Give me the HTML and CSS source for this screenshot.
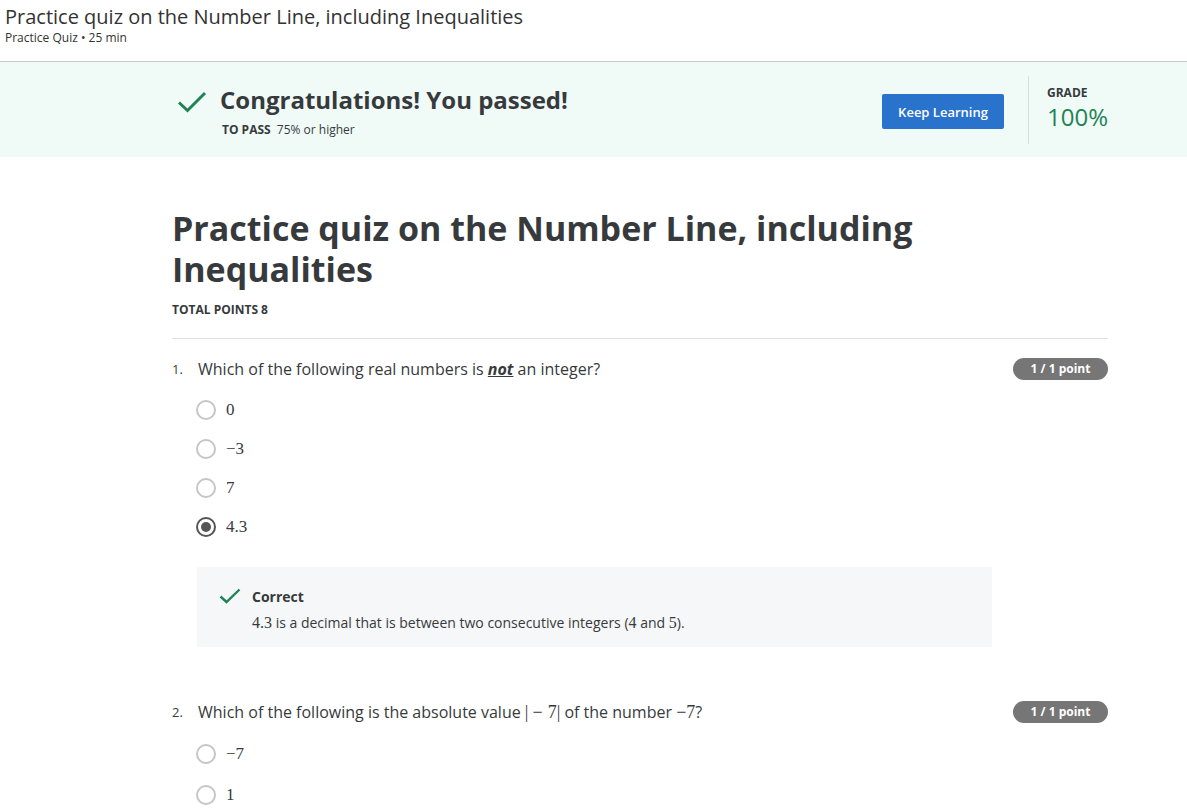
FILE: index.html
```html
<!DOCTYPE html>
<html>
<head>
<meta charset="utf-8">
<link rel="stylesheet" href="styles.css">
</head>
<body>
<header class="top">
  <div class="top-title">Practice quiz on the Number Line, including Inequalities</div>
  <div class="top-sub">Practice Quiz • 25 min</div>
</header>
<section class="banner">
  <div class="banner-inner">
    <svg class="banner-check" width="30" height="22" viewBox="0 0 30 22"><path d="M2 11.5 L10.5 19.5 L28 2" fill="none" stroke="#1f8354" stroke-width="3"/></svg>
    <div class="banner-text">
      <div class="banner-title">Congratulations! You passed!</div>
      <div class="banner-pass"><b>TO PASS</b> 75% or higher</div>
    </div>
    <button class="btn">Keep Learning</button>
    <div class="divider"></div>
    <div class="grade">
      <div class="grade-label">GRADE</div>
      <div class="grade-value">100%</div>
    </div>
  </div>
</section>
<main class="content">
  <h1 class="quiz-title">Practice quiz on the Number Line, including Inequalities</h1>
  <div class="total">TOTAL POINTS 8</div>
  <hr class="rule">
  <div class="question">
    <div class="q-head">
      <span class="q-num">1.</span>
      <span class="q-text">Which of the following real numbers is <em class="not">not</em> an integer?</span>
      <span class="badge">1 / 1 point</span>
    </div>
    <ul class="options">
      <li class="option"><span class="radio"></span><span class="math">0</span></li>
      <li class="option"><span class="radio"></span><span class="math">−3</span></li>
      <li class="option"><span class="radio"></span><span class="math">7</span></li>
      <li class="option"><span class="radio checked"></span><span class="math">4.3</span></li>
    </ul>
    <div class="feedback">
      <svg class="fb-check" width="22" height="16" viewBox="0 0 22 16"><path d="M1.5 8.5 L7.5 14 L20.5 1.5" fill="none" stroke="#1f8354" stroke-width="2.4"/></svg>
      <div class="fb-body">
        <div class="fb-title">Correct</div>
        <div class="fb-text"><span class="math">4.3</span> is a decimal that is between two consecutive integers (<span class="math">4</span> and <span class="math">5</span>).</div>
      </div>
    </div>
  </div>
  <div class="question q2">
    <div class="q-head">
      <span class="q-num">2.</span>
      <span class="q-text">Which of the following is the absolute value <span class="math">|<span class="bin">−</span>7|</span> of the number <span class="math">−7</span>?</span>
      <span class="badge">1 / 1 point</span>
    </div>
    <ul class="options">
      <li class="option"><span class="radio"></span><span class="math">−7</span></li>
      <li class="option"><span class="radio"></span><span class="math">1</span></li>
    </ul>
  </div>
</main>
</body>
</html>
```
FILE: styles.css
```css
* { box-sizing: border-box; }
html, body { margin: 0; padding: 0; }
body {
  font-family: "Open Sans", "Liberation Sans", sans-serif;
  color: #373a3c;
  background: #fff;
  width: 1187px;
  overflow: hidden;
}
.top {
  height: 62px;
  padding: 3px 5px 0;
  border-bottom: 1px solid #c8c8c8;
}
.top-title {
  font-size: 20px;
  line-height: 27px;
  color: #333;
}
.top-sub {
  font-size: 12px;
  line-height: 16px;
  color: #333;
}
.banner {
  background: #f0faf7;
  height: 95px;
}
.banner-inner {
  display: flex;
  align-items: flex-start;
  margin-left: 177px;
  width: 931px;
  height: 100%;
}
.banner-check { margin-top: 29px; flex: none; }
.banner-text { margin-left: 13px; margin-top: 22px; flex: 1; }
.banner-title {
  font-size: 24px;
  font-weight: 700;
  line-height: 32px;
  color: #373a3c;
}
.banner-pass {
  font-size: 12px;
  line-height: 16px;
  margin-top: 6px;
  margin-left: 2px;
}
.banner-pass b { margin-right: 3px; }
.btn {
  margin-top: 32px;
  width: 122px;
  height: 35px;
  background: #2a73cc;
  color: #fff;
  border: none;
  border-radius: 2px;
  font-family: "Open Sans", sans-serif;
  font-size: 13px;
  font-weight: 600;
  padding: 0;
}
.divider {
  margin-left: 24px;
  margin-top: 14px;
  width: 1px;
  height: 68px;
  background: #dcdcdc;
}
.grade { margin-left: 18px; margin-top: 23px; width: 61px; flex: none; }
.grade-label {
  font-size: 12px;
  font-weight: 700;
  line-height: 16px;
}
.grade-value {
  margin-top: 1px;
  font-size: 24px;
  line-height: 30px;
  color: #1f8354;
  white-space: nowrap;
}
.content {
  margin-left: 172px;
  width: 936px;
  padding-top: 51px;
}
.quiz-title {
  margin: 0;
  font-size: 34px;
  line-height: 41px;
  font-weight: 700;
  color: #373a3c;
  width: 760px;
}
.total {
  margin-top: 12px;
  font-size: 12px;
  font-weight: 700;
  line-height: 16px;
}
.rule {
  margin: 20px 0 0;
  border: none;
  border-top: 1px solid #e1e1e1;
}
.question { padding-top: 18px; }
.q2 { padding-top: 53px; }
.q-head {
  display: flex;
  align-items: center;
  height: 23px;
}
.q-num {
  font-size: 13px;
  width: 26px;
}
.q-text {
  flex: 1;
  font-size: 16px;
}
.not {
  font-weight: 700;
  font-style: italic;
  text-decoration: underline;
}
.badge {
  width: 95px;
  height: 22px;
  border-radius: 11px;
  background: #767676;
  color: #fff;
  font-size: 12px;
  font-weight: 700;
  text-align: center;
  line-height: 22px;
}
.math {
  font-family: "Liberation Serif", serif;
  font-size: 17px;
}
.q-text .math { font-size: 18px; }
.bin { margin: 0 5px 0 4px; }
.options {
  list-style: none;
  margin: 0;
  padding: 20px 0 0 24px;
  display: flex;
  flex-direction: column;
  gap: 19px;
}
.q2 .options { padding-top: 21px; gap: 21px; }
.option {
  display: flex;
  align-items: center;
  gap: 10px;
  height: 20px;
}
.radio {
  width: 20px;
  height: 20px;
  border: 2px solid #c6c6c6;
  border-radius: 50%;
  flex: none;
  position: relative;
}
.radio.checked {
  border: 2px solid #555;
}
.radio.checked::after {
  content: "";
  position: absolute;
  left: 3px;
  top: 3px;
  width: 10px;
  height: 10px;
  border-radius: 50%;
  background: #555;
}
.feedback {
  margin: 30px 0 0 25px;
  width: 795px;
  height: 80px;
  background: #f5f7f8;
  display: flex;
  padding: 21px 0 0 22px;
}
.fb-check { flex: none; }
.fb-body { margin-left: 11px; margin-top: -1px; }
.fb-title {
  font-size: 14px;
  font-weight: 700;
  line-height: 20px;
}
.fb-text {
  margin-top: 7px;
  font-size: 14px;
  line-height: 18px;
}
.fb-text .math { font-size: 16px; }
```
